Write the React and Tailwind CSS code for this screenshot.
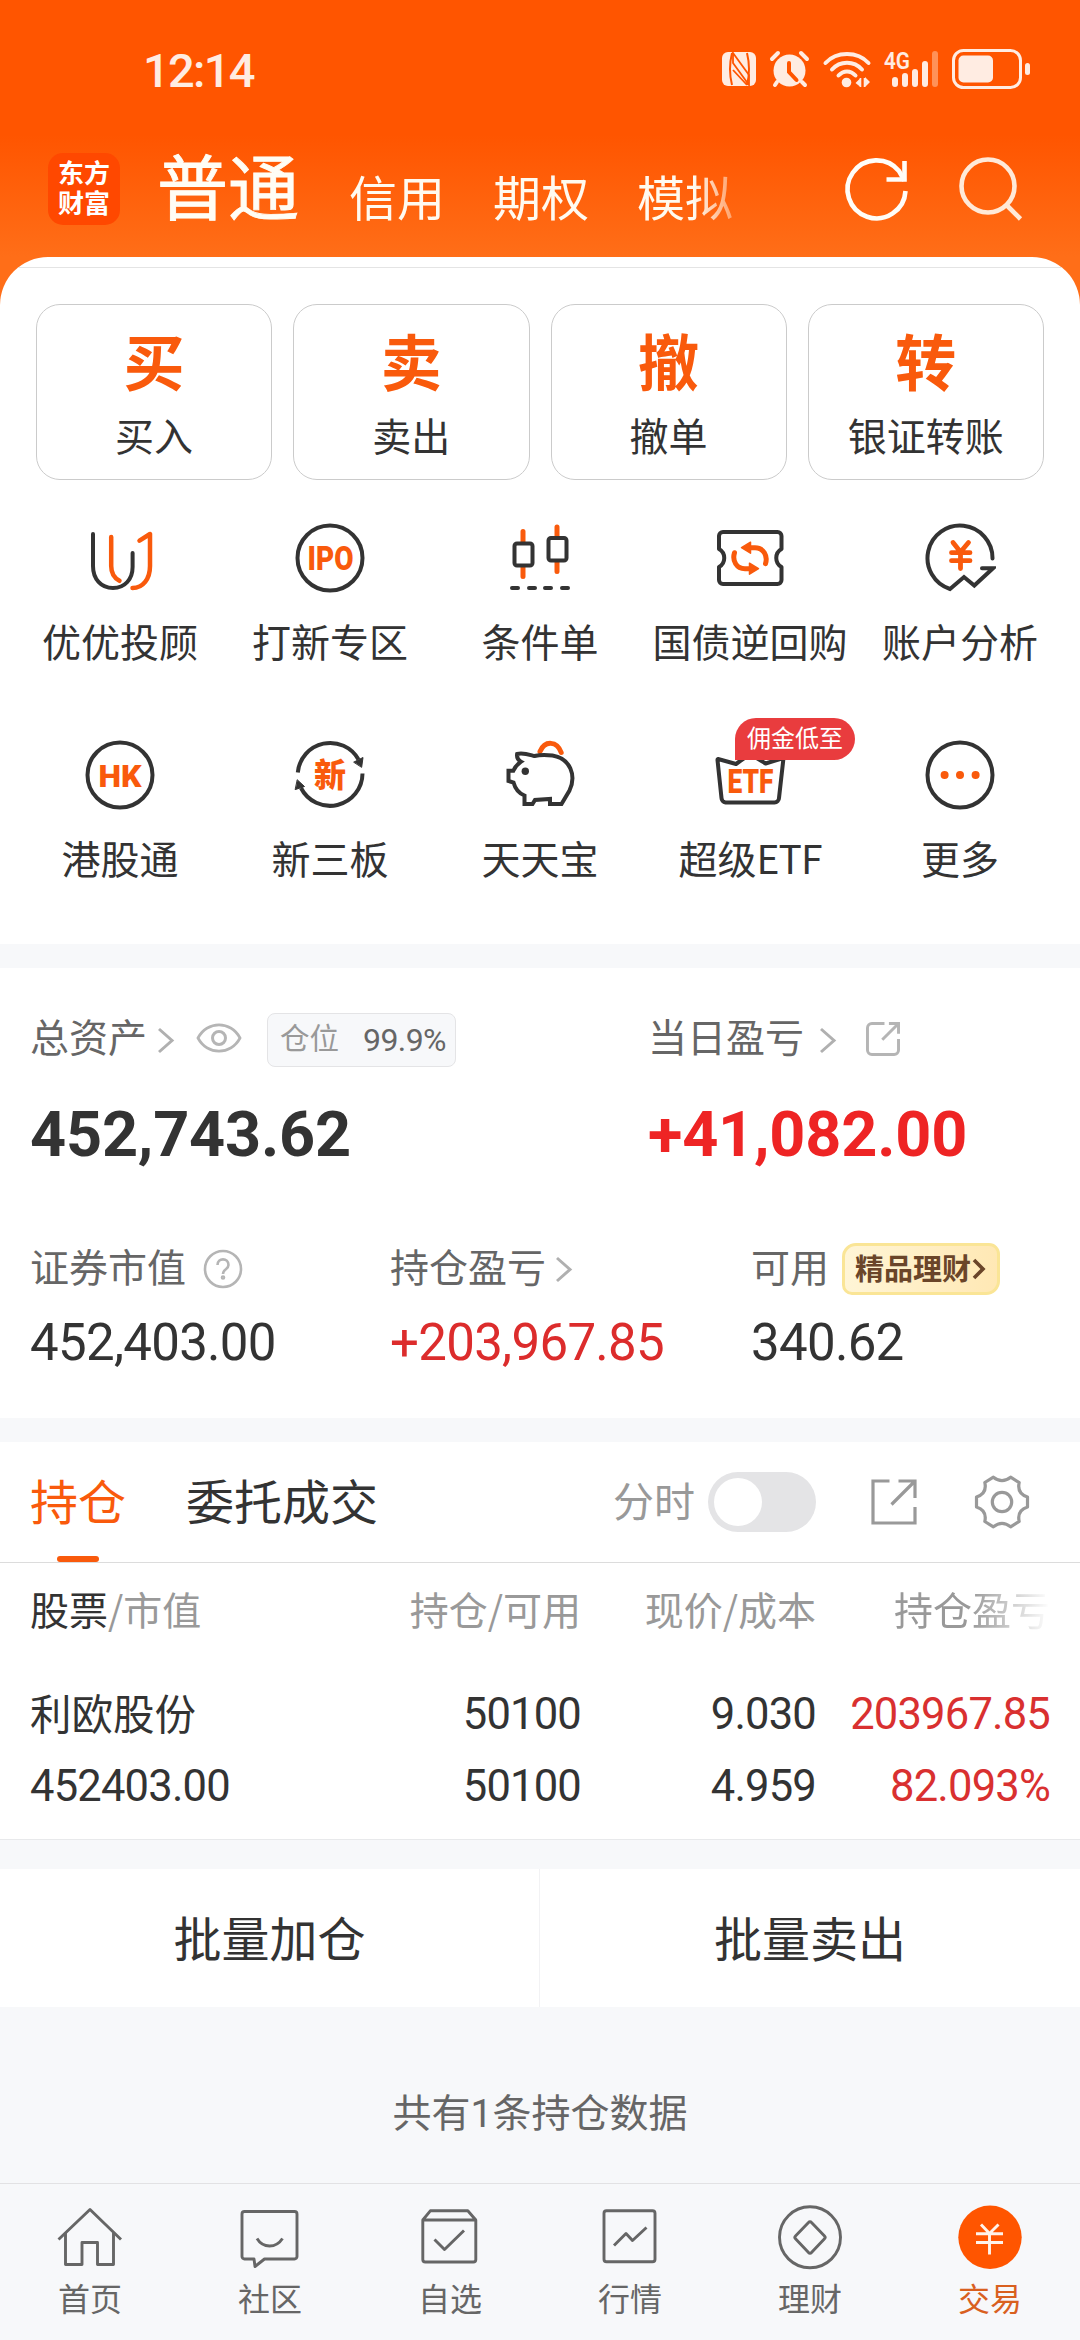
import React from "react";

const CJK = "font-['Noto_Sans_CJK_SC',sans-serif]";
const NUM = "font-['Roboto','Noto_Sans_CJK_SC',sans-serif]";
const DARK = "#333333";
const ORANGE = "#f95a0c";

function StatusBar() {
  return (
    <div className="flex h-[137px] items-center">
      <div className={`${NUM} ml-[143px] w-[579px] text-[47px] leading-[60px] font-medium tracking-[-1.7px] text-[#ffece2]`}>
        <span className="relative top-[2px]">12:14</span>
      </div>
      <svg className="h-[44px] w-[310px]" viewBox="722 47 310 44" fill="none">
        <rect x="722" y="52" width="34" height="34" rx="6" fill="#ffece2" />
        <path d="M732 53q-4 16 0 32M747 53q4 16 0 32" stroke="#ff5500" strokeWidth="2" />
        <path d="M733 53l16 22v10L733 63zM733 70l14 15" stroke="#ff5500" strokeWidth="1.800" />
        <circle cx="789.500" cy="70.500" r="16" fill="#ffece2" />
        <path d="M772 59l6-6M807 59l-6-6M777 82l-2 3M802 82l3 3" stroke="#ffece2" strokeWidth="4" strokeLinecap="round" />
        <path d="M789 63v9l7.500 8" stroke="#ff5500" strokeWidth="4" strokeLinecap="round" />
        <path d="M825.500 63c11-12 32-12 43 0M832 69.500c8-9 22-9 30 0M838.500 75.500c5-5.500 12-5.500 17 0" stroke="#ffece2" strokeWidth="4" strokeLinecap="round" />
        <circle cx="846.500" cy="82.500" r="4.800" fill="#ffece2" />
        <path d="M855.500 83l5-5v9zM870 82l-5-5v10z" fill="#ffece2" />
        <path d="M860.500 78v9M864.500 78v9" stroke="#ffece2" strokeWidth="1.600" />
        <text x="884" y="69" fontSize="24" fontWeight="600" fontFamily="Roboto, sans-serif" textLength="26" lengthAdjust="spacingAndGlyphs" fill="#ffece2">4G</text>
        <path d="M895 80v4M905 76v8M915 72v12M925 64v20" stroke="#ffece2" strokeWidth="6" strokeLinecap="round" />
        <path d="M935 54v30" stroke="#ff9158" strokeWidth="6" strokeLinecap="round" />
        <rect x="953.500" y="50.500" width="67" height="37" rx="10" stroke="#ffece2" strokeWidth="3" />
        <rect x="958.500" y="55.500" width="34.500" height="27" rx="5" fill="#ffece2" />
        <rect x="1025" y="63" width="5" height="12" rx="2.500" fill="#ffece2" />
      </svg>
    </div>
  );
}

function Header() {
  return (
    <div className="flex h-[120px] items-start">
      <div className={`${CJK} mt-[16px] ml-[48px] h-[72px] w-[72px] rounded-[15px] bg-[#ff4800] pt-[4px] text-center text-[26px] leading-[30px] font-bold text-white`}>
        东方<br />财富
      </div>
      <div className={`${CJK} mt-[6px] ml-[37px] w-[192px] text-[71px] leading-[80px] text-[#fffdf5] [-webkit-text-stroke:0.9px_#fffdf5]`}>普通</div>
      <div className={`${CJK} mt-[28px] flex w-[400px] gap-[48px] text-[48px] leading-[60px] text-[#fffaf0] [mask-image:linear-gradient(to_right,#000_345px,transparent_410px)]`}>
        <span>信用</span>
        <span>期权</span>
        <span>模拟</span>
      </div>
      <svg className="mt-[17px] ml-[92px] h-[72px] w-[72px]" viewBox="840 154 72 72" fill="none" stroke="#fffdf8" strokeWidth="4.600">
        <path d="M904.500 191a29 29 0 1 1-6.500-20l5.500 9.500" />
        <path d="M903.500 161v18.500h-18" />
      </svg>
      <svg className="mt-[17px] ml-[40px] h-[72px] w-[72px]" viewBox="952 154 72 72" fill="none" stroke="#ffe9d8" strokeWidth="4.600">
        <circle cx="987" cy="186" r="26.500" />
        <path d="M1005.500 205l14 14" />
      </svg>
    </div>
  );
}

const quick = [
  ["买", "买入"],
  ["卖", "卖出"],
  ["撤", "撤单"],
  ["转", "银证转账"],
];

function Svg({ children }) {
  return (
    <svg className="h-[72px] w-[72px]" viewBox="0 0 72 72" fill="none" strokeWidth="4" strokeLinecap="round" strokeLinejoin="round">
      {children}
    </svg>
  );
}

function IconWord({ x, y, w, size, children, family = "Roboto, sans-serif" }) {
  return (
    <text x={x} y={y} fontSize={size} fontWeight="900" fontFamily={family} textLength={w} lengthAdjust="spacingAndGlyphs" fill={ORANGE}>
      {children}
    </text>
  );
}

const tools = [
  [
    "优优投顾",
    <Svg>
      <path stroke={DARK} d="M9 12v32C9 57 17 66 29 66s19.600-9 19.600-21V31" />
      <path stroke={ORANGE} strokeWidth="4.500" d="M27.200 15v29c0 7 3 12 8.300 14.800M55.500 18.700L66 12v32c0 13-7 22-17.500 22" />
    </Svg>,
  ],
  [
    "打新专区",
    <Svg>
      <circle cx="36" cy="36" r="32.500" stroke={DARK} />
      <IconWord x="13.500" y="48" w="46" size="33">IPO</IconWord>
    </Svg>,
  ],
  [
    "条件单",
    <Svg>
      <path stroke={ORANGE} strokeWidth="5" d="M19 9.500V20M19 45v9.500M53 5v10M53 40v9.500" />
      <path stroke={DARK} d="M8 66h6M25 66h6M41 66h6M58 66h6" />
      <rect x="10.500" y="21.500" width="18" height="22" rx="2.500" stroke={DARK} />
      <rect x="44.500" y="16" width="18" height="22.500" rx="2.500" stroke={DARK} />
    </Svg>,
  ],
  [
    "国债逆回购",
    <Svg>
      <path stroke={DARK} d="M9 10h54.500a4 4 0 0 1 4 4v13c-7 4-7 14 0 18v13a4 4 0 0 1-4 4H9a4 4 0 0 1-4-4V45c7-4 7-14 0-18V14a4 4 0 0 1 4-4z" />
      <path stroke={ORANGE} strokeWidth="5" d="M36 25.700h5c8.500 0 13 8 10.500 16M36 46.700h-5c-8.500 0-13-8-10.500-16" />
      <path fill={ORANGE} stroke={ORANGE} strokeWidth="1.500" d="M27.500 25.700l9-5.500v11zM44.500 46.700l-9-5.500v11z" />
    </Svg>,
  ],
  [
    "账户分析",
    <Svg>
      <path stroke={DARK} strokeLinejoin="miter" d="M68.500 36.500A32.500 32.500 0 1 0 26 67l14-12 10.300 8.500L69 46.300H58" />
      <path stroke={ORANGE} strokeWidth="4.800" d="M29 20.500L36.500 30l8-9.500M36.500 30v16.500M27.500 30.700h18.500M27.500 38.700h18.500" />
    </Svg>,
  ],
  [
    "港股通",
    <Svg>
      <circle cx="36" cy="36" r="32.500" stroke={DARK} />
      <IconWord x="14.500" y="47.500" w="43" size="32">HK</IconWord>
    </Svg>,
  ],
  [
    "新三板",
    <Svg>
      <path stroke={DARK} strokeLinecap="butt" d="M3.800 33.500A32.500 32.500 0 0 1 64.500 20.500M68.500 34.500A32.500 32.500 0 0 1 7 49" />
      <path fill={DARK} stroke={DARK} strokeWidth="1" d="M60 23l9-4.500-1.300 9.500zM3.500 41l7 6.500-9 3z" />
      <IconWord x="20" y="47.500" w="32" size="33" family="'Noto Sans CJK SC', sans-serif">新</IconWord>
    </Svg>,
  ],
  [
    "天天宝",
    <Svg>
      <path stroke={ORANGE} strokeWidth="5" d="M36 12.500C41 1 53 2 57.200 13.500" />
      <path stroke={DARK} strokeLinejoin="miter" fill="#fff" d="M17 22.700c-3-1.500-4.400-4-3.900-7.700 6-1.500 11.500.500 17.400 2 6-1.500 12-1.200 18-.500 18 3 24 20 17 35L57.500 65H46v-5L31 61l-2.500 4H20.500v-8.500C14 54 11 49 9.500 43.500L4.500 42V31.700h4.800c1.700-4 4.200-6.500 7.700-9z" />
      <circle cx="21.300" cy="32.300" r="3.700" fill={DARK} />
    </Svg>,
  ],
  [
    "超级ETF",
    <Svg>
      <path stroke={DARK} d="M4 20l18 5L36 15l15.600 9.500L69.500 19 65 59a4.500 4.500 0 0 1-4.500 4.500h-49A4.500 4.500 0 0 1 7.500 59L3.500 21a1 1 0 0 1 .500-1z" />
      <IconWord x="13.500" y="54" w="46" size="33">ETF</IconWord>
    </Svg>,
  ],
  [
    "更多",
    <Svg>
      <circle cx="36" cy="36" r="32.500" stroke={DARK} />
      <path stroke={ORANGE} strokeWidth="8" d="M20.600 36h.01M36 36h.01M51.600 36h.01" />
    </Svg>,
  ],
];

function Chevron() {
  return (
    <svg className="h-[30px] w-[18px]" viewBox="0 0 18 30" fill="none" stroke="#b0b0b0" strokeWidth="3">
      <path d="M2 4l13 11.500L2 27" />
    </svg>
  );
}

function ShareBox({ className, color, r, w }) {
  return (
    <svg className={className} viewBox="0 0 46 46" fill="none" stroke={color} strokeWidth={w}>
      <path d={r ? "M25 2H8a6 6 0 0 0-6 6v30a6 6 0 0 0 6 6h30a6 6 0 0 0 6-6V23" : "M18.500 2H2v42h42V28"} />
      <path d={r ? "M31 2h13v14M44 2L22 24" : "M27.500 2H44v17M43.500 2.500L20.500 25.500"} />
    </svg>
  );
}

function Assets() {
  return (
    <div className="h-[450px] bg-white">
      <div className="flex h-[140px] items-center pl-[30px]">
        <div className="flex w-[618px] items-center">
          <span className={`${CJK} relative top-[-3px] text-[39px] leading-[50px] text-[#666]`}>总资产</span>
          <span className="ml-[10px] pt-[4px]"><Chevron /></span>
          <svg className="ml-[21px] h-[34px] w-[46px]" viewBox="0 0 46 34" fill="none" stroke="#b5b5b5" strokeWidth="3">
            <path d="M2 17C11-2.500 35-2.500 44 17 35 36.500 11 36.500 2 17z" strokeLinejoin="round" transform="translate(0 1.700) scale(1 .9)" />
            <circle cx="23" cy="17" r="6.500" />
          </svg>
          <div className="relative top-[2px] ml-[25px] flex h-[54px] w-[189px] items-center rounded-[8px] border border-[#e4e4e6] bg-[#f7f8fa]">
            <span className={`${CJK} relative top-[-4px] ml-[12px] text-[29.5px] leading-[40px] text-[#999]`}>仓位</span>
            <span className={`${NUM} ml-[24px] text-[32px] leading-[40px] tracking-[-0.6px] text-[#666]`}>99.9%</span>
          </div>
        </div>
        <span className={`${CJK} relative top-[-3px] text-[39px] leading-[50px] text-[#666]`}>当日盈亏</span>
        <span className="ml-[15px] pt-[4px]"><Chevron /></span>
        <ShareBox className="relative top-[1px] ml-[29px] h-[34px] w-[34px]" color="#b5b5b5" r w="4" />
      </div>
      <div className={`${NUM} relative top-[2px] flex h-[50px] items-center pl-[30px] text-[63px] leading-[50px] font-bold`}>
        <span className="w-[618px] tracking-[-0.2px] text-[#333]">452,743.62</span>
        <span className="tracking-[-0.2px] text-[#ee2424]">+41,082.00</span>
      </div>
      <div className="mt-[84px] flex h-[54px] items-center pl-[30px]">
        <div className="flex w-[360px] items-center">
          <span className={`${CJK} relative top-[-4px] text-[39px] leading-[50px] text-[#666]`}>证券市值</span>
          <svg className="ml-[17px] h-[40px] w-[40px]" viewBox="0 0 40 40" fill="none" stroke="#b5b5b5" strokeWidth="2.600">
            <circle cx="20" cy="20" r="18" />
            <path d="M14.500 16c0-7.500 11-7.500 11 0 0 4.500-5.500 4-5.500 9" />
            <circle cx="20" cy="28.500" r="1" />
          </svg>
        </div>
        <div className="flex w-[361px] items-center">
          <span className={`${CJK} relative top-[-4px] text-[39px] leading-[50px] text-[#666]`}>持仓盈亏</span>
          <span className="ml-[9px]"><Chevron /></span>
        </div>
        <span className={`${CJK} relative top-[-4px] text-[39px] leading-[50px] text-[#666]`}>可用</span>
        <div className="ml-[13px] flex h-[52px] w-[158px] items-center rounded-tl-[14px] rounded-tr-[11px] rounded-br-[14px] rounded-bl-[10px] border-[3px] border-[#fae596] bg-linear-to-r from-[#fff5d6] to-[#ffe8b4] pl-[10px]">
          <span className={`${CJK} relative top-[-2px] text-[29px] leading-[40px] font-bold text-[#6a4529]`}>精品理财</span>
          <svg className="ml-[1px] h-[24px] w-[14px]" viewBox="0 0 14 24" fill="none" stroke="#6a4529" strokeWidth="3.600">
            <path d="M2 3l9 9-9 9" />
          </svg>
        </div>
      </div>
      <div className={`${NUM} mt-[20px] flex h-[54px] items-center pl-[30px] text-[51px] leading-[54px] tracking-[-0.7px] text-[#333]`}>
        <span className="w-[360px]">452,403.00</span>
        <span className="w-[361px] text-[#dc2c2c]">+203,967.85</span>
        <span>340.62</span>
      </div>
    </div>
  );
}

function Holdings() {
  return (
    <div className="h-[398px] border-b border-[#e8e9eb] bg-white">
      <div className="flex h-[121px] items-center border-b border-[#dcdcdc] pl-[30px]">
        <div className="relative flex h-[120px] w-[96px] items-center">
          <span className={`${CJK} relative top-[-3px] text-[48px] leading-[60px] text-[#f95a0c]`}>持仓</span>
          <div className="absolute bottom-0 left-[27px] h-[6px] w-[42px] rounded-[3px] bg-[#f95a0c]" />
        </div>
        <span className={`${CJK} relative top-[-3px] ml-[60px] w-[427px] text-[48px] leading-[60px] text-[#333]`}>委托成交</span>
        <span className={`${CJK} relative top-[-3px] w-[95px] text-[41px] leading-[50px] text-[#999]`}>分时</span>
        <div className="flex h-[60px] w-[108px] items-center rounded-full bg-[#e4e4e6] pl-[6px]">
          <div className="h-[48px] w-[48px] rounded-full bg-white" />
        </div>
        <ShareBox className="ml-[55px] h-[46px] w-[46px]" color="#999" w="3.200" />
        <svg className="ml-[56px] h-[58px] w-[58px]" viewBox="-29 -29 58 58" fill="none" stroke="#999" strokeWidth="3.200" strokeLinejoin="round">
          <path d="M25.500-5V5Q14.700 8.500 17.200 19.500L8.600 24.800Q0 18-8.600 24.800L-17.200 19.500Q-14.700 8.500-25.500 5V-5Q-14.700-8.500-17.200-19.500L-8.600-24.800Q0-18 8.600-24.800L17.200-19.500Q14.700-8.500 25.500-5Z" />
          <circle r="9.700" />
        </svg>
      </div>
      <div className={`${CJK} grid h-[96px] grid-cols-[300px_251px_235px_234px] items-center pl-[30px] text-right text-[39px] leading-[50px] text-[#999]`}>
        <span className="relative top-[-3px] text-left"><span className="text-[#333]">股票</span>/市值</span>
        <span className="relative top-[-3px]">持仓/可用</span>
        <span className="relative top-[-3px]">现价/成本</span>
        <span className="relative top-[-3px] [mask-image:linear-gradient(to_left,transparent_0px,#000_80px)]">持仓盈亏</span>
      </div>
      <div className={`${NUM} grid grid-cols-[300px_251px_235px_234px] pt-[20px] pl-[30px] text-right text-[43.5px] leading-[72px] tracking-[-0.8px] text-[#333]`}>
        <span className={`${CJK} relative top-[-3px] text-left text-[41.5px] tracking-normal`}>利欧股份</span>
        <span>50100</span>
        <span>9.030</span>
        <span className="text-[#d93030]">203967.85</span>
        <span className="text-left">452403.00</span>
        <span>50100</span>
        <span>4.959</span>
        <span className="text-[#d93030]">82.093%</span>
      </div>
    </div>
  );
}

const nav = [
  ["首页", <><path d="M4.500 37.500L36 7.500l31 30" /><path d="M11.500 31v31.500H28V40.500h15.500v22h16V31" /></>],
  ["社区", <><path d="M10.500 9.500h50a2.500 2.500 0 0 1 2.500 2.500v42.500a2.500 2.500 0 0 1-2.500 2.500H30.500L21 64.500 20 57h-9.500A2.500 2.500 0 0 1 8 54.500V12a2.500 2.500 0 0 1 2.500-2.500z" /><path d="M23 36.500c6 10 19 10 25.500 0" /></>],
  ["自选", <><path d="M8.800 18h53v39.500a2.500 2.500 0 0 1-2.500 2.500h-48a2.500 2.500 0 0 1-2.500-2.500zl7.500-9.200h37.500l8 9.200" /><path d="M20.500 37.500l10 10L50 28.500" /></>],
  ["行情", <><rect x="10" y="8.800" width="51" height="51" rx="2.500" /><path d="M20 43.500l12-12 6.500 7L52.500 25.500" /></>],
  ["理财", <><circle cx="36" cy="35.300" r="30.500" /><path d="M34.500 20.500a2 2 0 0 1 3 0l13 13.500a2 2 0 0 1 0 2.800l-13 13.700a2 2 0 0 1-3 0l-13-13.700a2 2 0 0 1 0-2.800z" /></>],
];

function BottomNav() {
  return (
    <div className={`${CJK} grid h-[157px] grid-cols-6 border-t border-[#e2e2e4] bg-[#f7f8fa] pt-[18px] text-[32px] leading-[44px] text-[#666]`}>
      {nav.map(([name, icon]) => (
        <div key={name} className="flex flex-col items-center">
          <svg className="h-[72px] w-[72px]" viewBox="0 0 72 72" fill="none" stroke="#666" strokeWidth="2.900" strokeLinejoin="round">{icon}</svg>
          <span className="mt-[1px]">{name}</span>
        </div>
      ))}
      <div className="flex flex-col items-center text-[#d9601f]">
        <svg className="h-[72px] w-[72px]" viewBox="0 0 72 72" fill="none">
          <circle cx="36" cy="35.300" r="31.700" fill="#ff5500" />
          <path d="M27 22.500L35.500 31.500 44.500 22.500M22 31.700h27M22 40.500h27M35.500 31v21.500" stroke="#fff3ea" strokeWidth="2.900" />
        </svg>
        <span className="mt-[1px]">交易</span>
      </div>
    </div>
  );
}

export default function App() {
  return (
    <div className="h-[2340px] w-[1080px] overflow-hidden bg-[#f7f8fa]">
      <div className="h-[944px] bg-[linear-gradient(to_bottom,#ff5500_0px,#ff5500_135px,#ff6e18_257px,#ff6e18_320px)]">
        <StatusBar />
        <Header />
        <div className="h-[687px] overflow-hidden rounded-t-[48px] bg-white">
          <div className="h-[11px] border-b border-[#e4e4e4]" />
          <div className="mt-[36px] grid h-[176px] grid-cols-4 gap-[21px] px-[36px]">
            {quick.map(([big, label]) => (
              <div key={label} className={`${CJK} flex flex-col items-center rounded-[24px] border border-[#cbcbcb]`}>
                <span className="mt-[17px] text-[61px] leading-[76px] font-bold text-[#f95a0c]">{big}</span>
                <span className="mt-[8px] text-[39px] leading-[56px] text-[#333]">{label}</span>
              </div>
            ))}
          </div>
          <div className="mt-[42px] grid auto-rows-[217px] grid-cols-5 px-[15px]">
            {tools.map(([name, icon]) => (
              <div key={name} className="relative flex flex-col items-center">
                {icon}
                <span className={`${CJK} mt-[18px] text-[39px] leading-[56px] whitespace-nowrap text-[#333]`}>
                  {name === "超级ETF" ? <>超级<span className="tracking-[-1px]">ETF</span></> : name}
                </span>
                {name === "超级ETF" && (
                  <div className={`${CJK} absolute top-[-21px] left-[90px] flex h-[42px] w-[120px] justify-center rounded-[21px] rounded-bl-none bg-[#e93c3e] text-[24px] leading-[38px] text-white`}>佣金低至</div>
                )}
              </div>
            ))}
          </div>
        </div>
      </div>
      <div className="h-[24px]" />
      <Assets />
      <div className="h-[24px]" />
      <Holdings />
      <div className="h-[29px]" />
      <div className={`${CJK} grid h-[138px] grid-cols-2 bg-white text-center text-[48px] leading-[134px] text-[#333]`}>
        <div className="border-r border-[#f2f2f4]">批量加仓</div>
        <div>批量卖出</div>
      </div>
      <div className={`${CJK} h-[176px] pt-[75px] text-center text-[39px] leading-[56px] text-[#666]`}>
        共有<span className="font-['Roboto',sans-serif]">1</span>条持仓数据
      </div>
      <BottomNav />
    </div>
  );
}
